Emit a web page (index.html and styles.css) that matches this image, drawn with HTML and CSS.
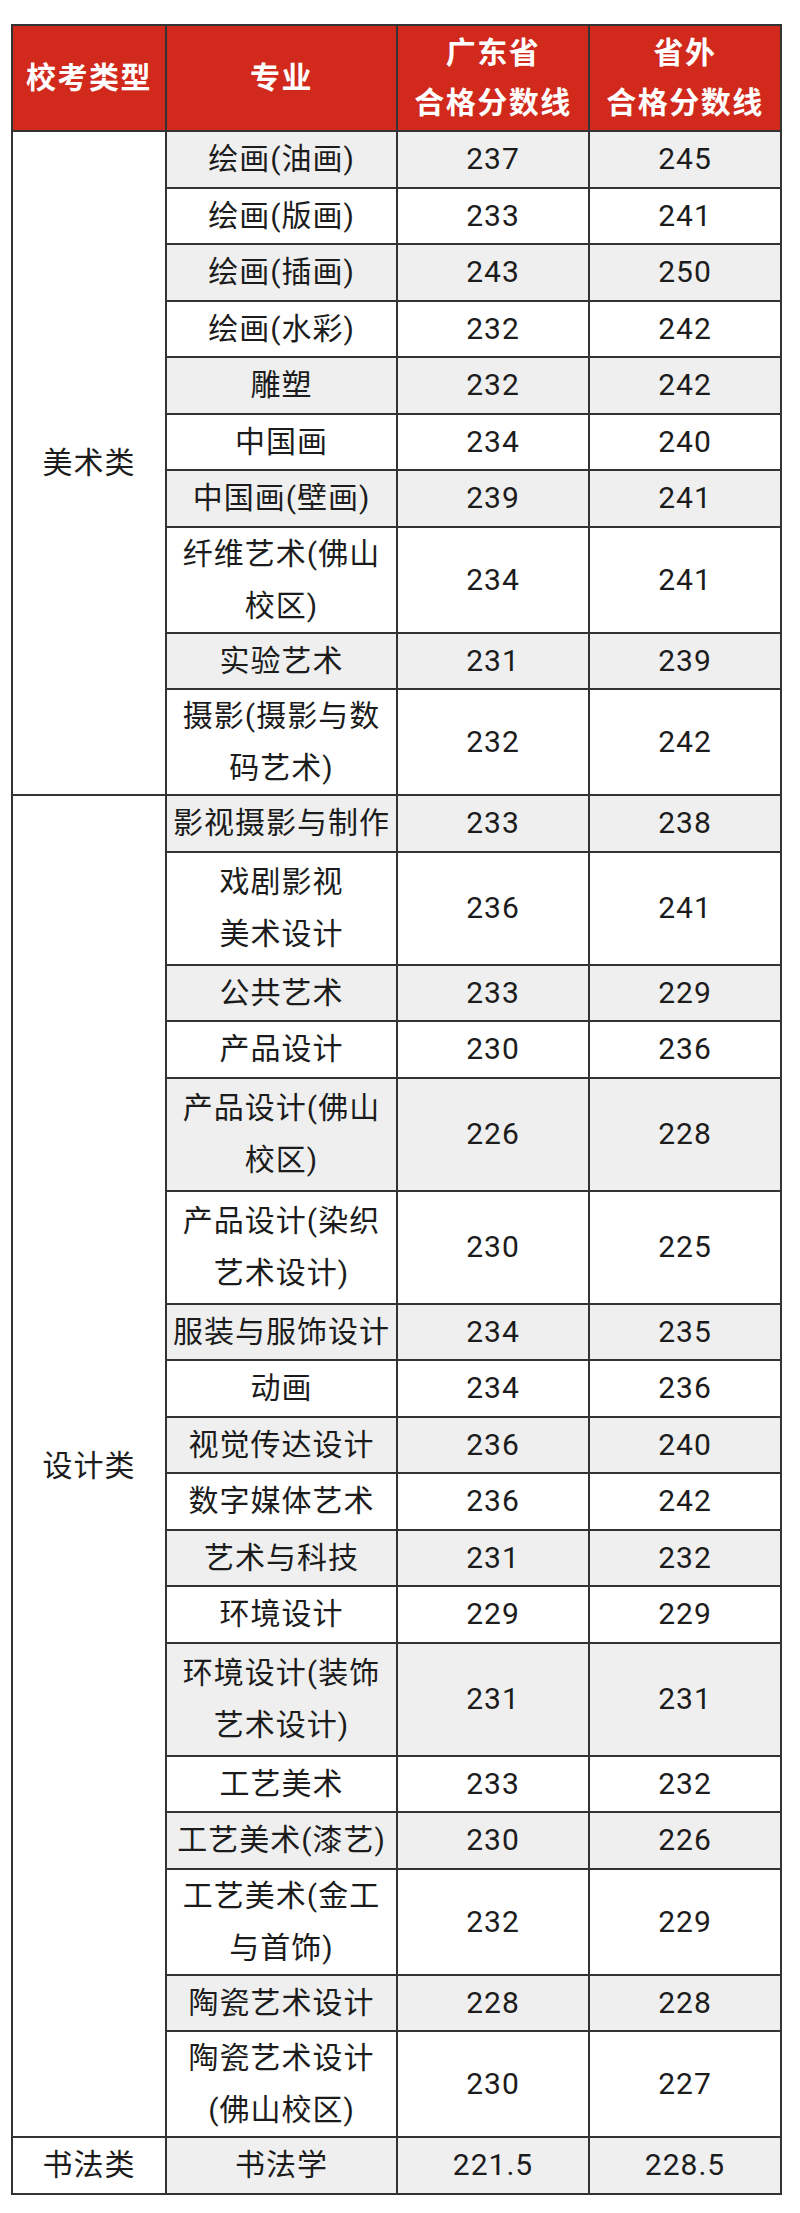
FILE: index.html
```html
<!DOCTYPE html>
<html lang="zh-CN">
<head>
<meta charset="utf-8">
<title>校考合格分数线</title>
<link rel="stylesheet" href="styles.css">
</head>
<body>
<table class="scores">
  <colgroup>
    <col class="c-type">
    <col class="c-major">
    <col class="c-score">
    <col class="c-score">
  </colgroup>
  <thead>
    <tr class="head">
      <th>校考类型</th>
      <th>专业</th>
      <th>广东省<br>合格分数线</th>
      <th>省外<br>合格分数线</th>
    </tr>
  </thead>
  <tbody>
    <tr class="s g"><td rowspan="10" class="cat">美术类</td><td>绘画(油画)</td><td>237</td><td>245</td></tr>
    <tr class="s"><td>绘画(版画)</td><td>233</td><td>241</td></tr>
    <tr class="s g"><td>绘画(插画)</td><td>243</td><td>250</td></tr>
    <tr class="s"><td>绘画(水彩)</td><td>232</td><td>242</td></tr>
    <tr class="s g"><td>雕塑</td><td>232</td><td>242</td></tr>
    <tr class="s"><td>中国画</td><td>234</td><td>240</td></tr>
    <tr class="s g"><td>中国画(壁画)</td><td>239</td><td>241</td></tr>
    <tr class="ds"><td>纤维艺术(佛山<br>校区)</td><td>234</td><td>241</td></tr>
    <tr class="s g"><td>实验艺术</td><td>231</td><td>239</td></tr>
    <tr class="ds"><td>摄影(摄影与数<br>码艺术)</td><td>232</td><td>242</td></tr>

    <tr class="s g"><td rowspan="18" class="cat">设计类</td><td>影视摄影与制作</td><td>233</td><td>238</td></tr>
    <tr class="dt"><td>戏剧影视<br>美术设计</td><td>236</td><td>241</td></tr>
    <tr class="s g"><td>公共艺术</td><td>233</td><td>229</td></tr>
    <tr class="s"><td>产品设计</td><td>230</td><td>236</td></tr>
    <tr class="dt g"><td>产品设计(佛山<br>校区)</td><td>226</td><td>228</td></tr>
    <tr class="dt"><td>产品设计(染织<br>艺术设计)</td><td>230</td><td>225</td></tr>
    <tr class="s g"><td>服装与服饰设计</td><td>234</td><td>235</td></tr>
    <tr class="s"><td>动画</td><td>234</td><td>236</td></tr>
    <tr class="s g"><td>视觉传达设计</td><td>236</td><td>240</td></tr>
    <tr class="s"><td>数字媒体艺术</td><td>236</td><td>242</td></tr>
    <tr class="s g"><td>艺术与科技</td><td>231</td><td>232</td></tr>
    <tr class="s"><td>环境设计</td><td>229</td><td>229</td></tr>
    <tr class="dt g"><td>环境设计(装饰<br>艺术设计)</td><td>231</td><td>231</td></tr>
    <tr class="s"><td>工艺美术</td><td>233</td><td>232</td></tr>
    <tr class="s g"><td>工艺美术(漆艺)</td><td>230</td><td>226</td></tr>
    <tr class="ds"><td>工艺美术(金工<br>与首饰)</td><td>232</td><td>229</td></tr>
    <tr class="s g"><td>陶瓷艺术设计</td><td>228</td><td>228</td></tr>
    <tr class="ds"><td>陶瓷艺术设计<br>(佛山校区)</td><td>230</td><td>227</td></tr>

    <tr class="s g"><td class="cat">书法类</td><td>书法学</td><td>221.5</td><td>228.5</td></tr>
  </tbody>
</table>
</body>
</html>
```

FILE: styles.css
```css
html, body {
  margin: 0;
  padding: 0;
  background: #ffffff;
}

body {
  font-family: "Roboto", "Noto Sans CJK SC", "Noto Sans", sans-serif;
  color: #1c1c1c;
}

.scores {
  margin: 24px 0 0 11px;
  width: 771px;
  table-layout: fixed;
  border-collapse: collapse;
}

.c-type { width: 154px; }
.c-major { width: 231px; }
.c-score { width: 192px; }

.scores th,
.scores td {
  border: 2px solid #333333;
  padding: 0 2px;
  text-align: center;
  vertical-align: middle;
  font-size: 30px;
  letter-spacing: 1px;
  white-space: nowrap;
}

.scores th {
  background: #d1291b;
  color: #ffffff;
  font-weight: 700;
  line-height: 50px;
  letter-spacing: 1.5px;
}

.head { height: 106px; }

.scores td {
  line-height: 52px;
  background: #ffffff;
}

.scores tr.g td:not(.cat) {
  background: #efefef;
}

.s { height: 56.5px; }
.ds { height: 106px; }
.dt { height: 113px; }
```
